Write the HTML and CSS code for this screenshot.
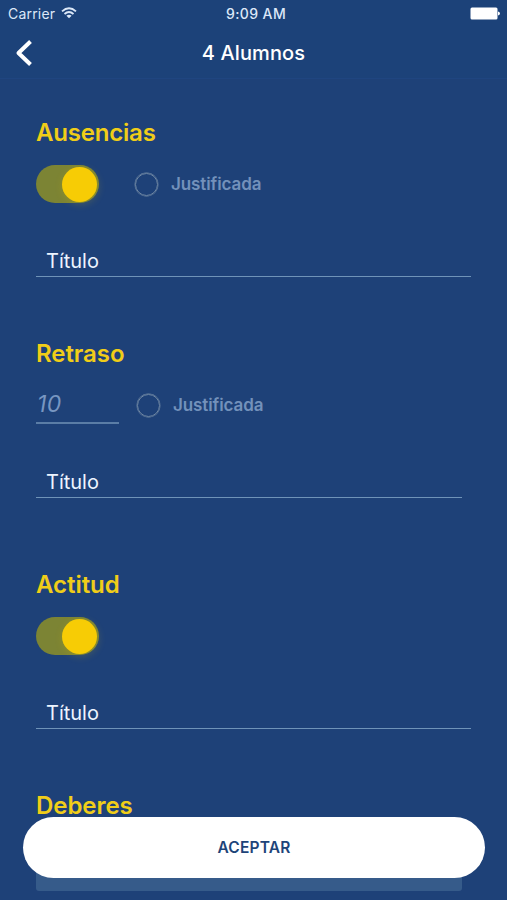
FILE: index.html
```html
<!DOCTYPE html>
<html lang="es">
<head>
<meta charset="utf-8">
<title>4 Alumnos</title>
<link rel="stylesheet" href="styles.css">
</head>
<body>
<div class="app">
  <header class="header">
    <div class="status">
      <div class="carrier"><span>Carrier</span>
        <svg class="wifi" width="16" height="12" viewBox="0 0 16 12" fill="none" stroke="currentColor" stroke-width="1.8"><path d="M1 4.4Q8-1.8 15 4.4M3.5 7Q8 3 12.500 7"/><path d="M5.400 8.700Q8 6.700 10.600 8.700L8 11.300Z" fill="currentColor" stroke="none"/></svg>
      </div>
      <span class="time">9:09 AM</span>
      <svg class="battery" width="31" height="13" viewBox="0 0 31 13" fill="#fff"><rect x="0.500" y="0.500" width="27" height="12" rx="1.500"/><path d="M28 4.500Q30 5 30 6.500T28 8.500Z"/></svg>
    </div>
    <div class="nav">
      <svg class="back" width="18" height="28" viewBox="0 0 18 28" fill="none" stroke="#fff" stroke-width="4" stroke-linejoin="round"><path d="M15.500 2.500L3.500 14L15.500 25.500"/></svg>
      <h1 class="nav-title">4 Alumnos</h1>
    </div>
  </header>
  <main class="form">
    <section class="group">
      <h2 class="heading wide">Ausencias</h2>
      <div class="controls">
        <div class="switch"><i class="knob"></i></div>
        <div class="check"><i class="ring"></i><span class="check-label">Justificada</span></div>
      </div>
      <div class="field">Título</div>
    </section>
    <section class="group late">
      <h2 class="heading">Retraso</h2>
      <div class="controls">
        <div class="minutes">10</div>
        <div class="check check-near"><i class="ring"></i><span class="check-label">Justificada</span></div>
      </div>
      <div class="field field-short">Título</div>
    </section>
    <section class="group">
      <h2 class="heading">Actitud</h2>
      <div class="controls"><div class="switch"><i class="knob"></i></div></div>
      <div class="field">Título</div>
    </section>
    <section class="group">
      <h2 class="heading">Deberes</h2>
      <div class="textarea"></div>
    </section>
  </main>
  <button class="accept">ACEPTAR</button>
</div>
</body>
</html>
```
FILE: styles.css
```css
* { box-sizing: border-box; }
body { margin: 0; background: #1e4178; font-family: Inter, "Liberation Sans", sans-serif; }
.app { position: relative; width: 507px; height: 900px; overflow: hidden; background: #1e4178; }
.header { height: 79px; background: #1c4279; border-bottom: 1px solid #1f4580; color: #fff; }
.status { display: grid; grid-template-columns: 1fr auto 1fr; align-items: center; height: 27px; padding: 0 6px 0 8px; color: #dce8f8; }
.carrier { display: flex; align-items: center; gap: 6px; font-size: 14px; letter-spacing: 0.2px; }
.wifi { margin-top: -2px; }
.time { margin-left: 3px; font-size: 14px; font-weight: 550; letter-spacing: 0.4px; }
.battery { justify-self: end; }
.nav { display: grid; grid-template-columns: 60px 1fr 60px; align-items: center; height: 51px; }
.back { margin-left: 15px; }
.nav-title { margin: 0; text-align: center; font-size: 20px; line-height: 24px; font-weight: 550; letter-spacing: 0.1px; }
.form { padding: 38px 36px 0; }
.group { height: 221px; }
.late { height: 231px; }
.heading { margin: 0; height: 32px; font-size: 24px; line-height: 32px; font-weight: 560; letter-spacing: -0.05px; color: #f0cd18; }
.wide { letter-spacing: -0.2px; }
.controls { display: flex; align-items: center; height: 70px; }
.switch { display: flex; align-items: center; justify-content: flex-end; width: 63px; height: 38px; padding-right: 2px; border-radius: 19px; background: #7c8434; }
.knob { width: 35px; height: 35px; border-radius: 50%; background: #f7cc05; box-shadow: 1px 2px 8px rgba(247, 204, 5, 0.2); }
.check { display: flex; align-items: center; gap: 13px; margin-left: 36px; }
.check-near { margin-left: 18px; }
.ring { width: 23px; height: 23px; border: 1.500px solid #7088a4; border-radius: 50%; box-shadow: 0 0 0 0.400px #7088a4; }
.check-label { font-size: 17px; font-weight: 600; letter-spacing: -0.1px; color: #7391bb; }
.minutes { width: 83px; height: 37px; padding-left: 1px; border-bottom: 2px solid #5b7da6; font-size: 23px; line-height: 34px; font-style: italic; letter-spacing: 0.5px; color: #7896c1; }
.field { height: 34px; margin-top: 24px; padding-left: 10px; border-bottom: 1.500px solid #6f93b8; font-size: 20px; line-height: 36px; color: #edf4ff; }
.field-short { width: 426px; }
.textarea { width: 426px; height: 69px; background: #365b8a; border-radius: 0 0 3px 3px; }
.accept { position: absolute; left: 23px; top: 817px; width: 462px; height: 61px; padding: 0; border: 0; border-radius: 31px; background: #fff; color: #1e4479; font-family: inherit; font-size: 15.500px; font-weight: 600; letter-spacing: 0.2px; }
```
